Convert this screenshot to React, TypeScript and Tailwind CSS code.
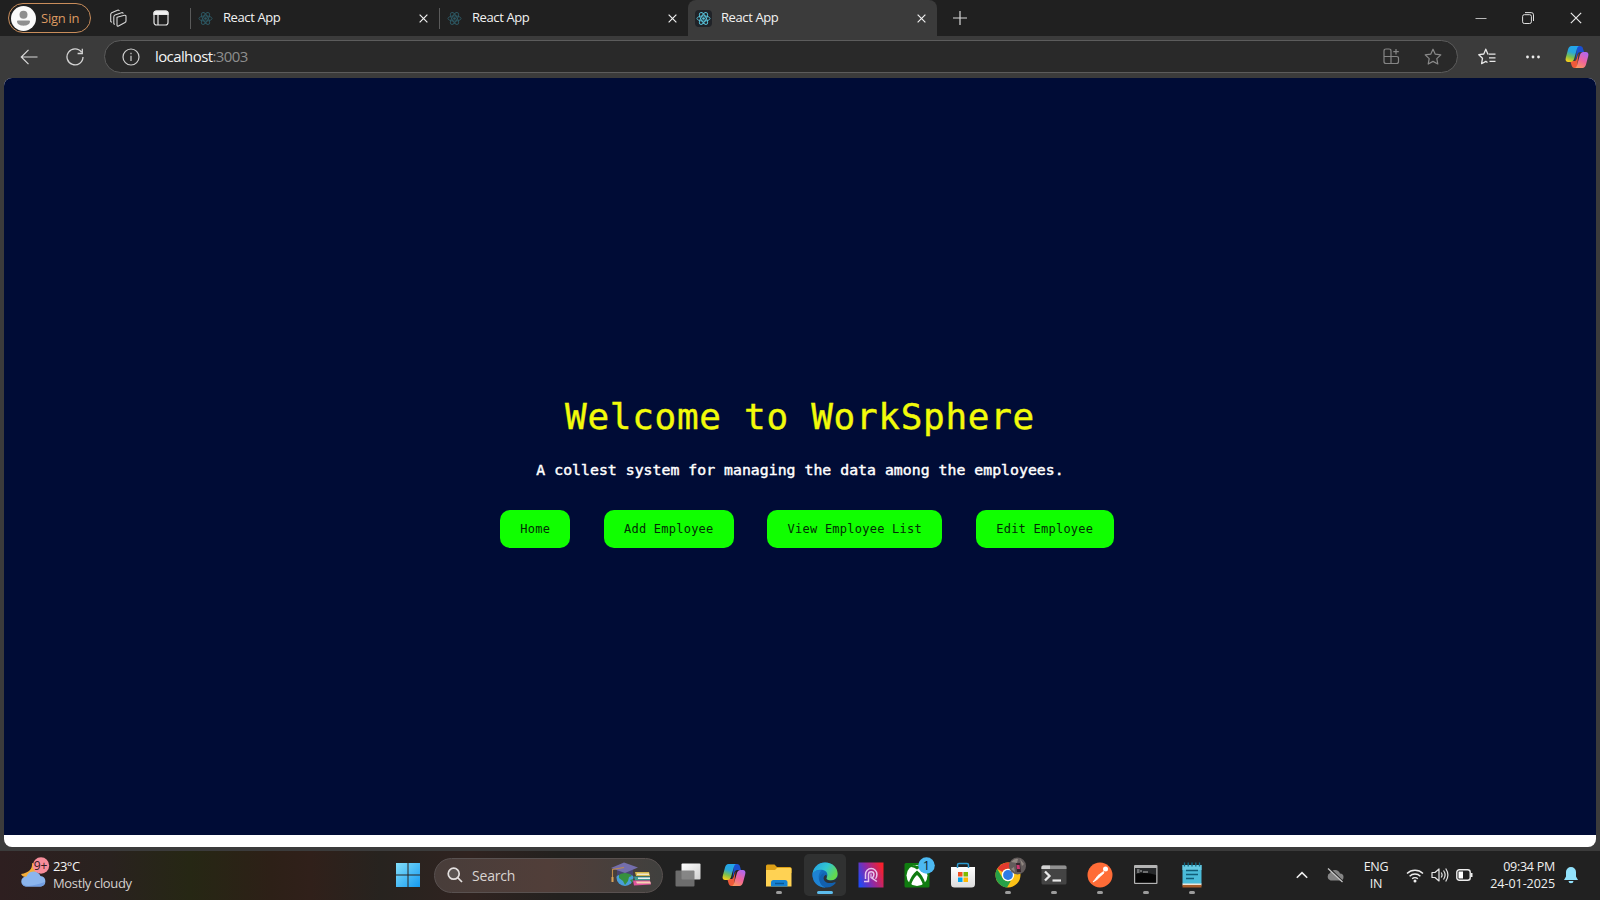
import React from "react";

type IconProps = { className?: string };

const ReactLogo = ({ className }: IconProps) => (
  <svg viewBox="0 0 16 16" className={className} fill="none" stroke="currentColor" strokeWidth="1">
    <ellipse cx="8" cy="8" rx="7" ry="2.8" />
    <ellipse cx="8" cy="8" rx="7" ry="2.8" transform="rotate(60 8 8)" />
    <ellipse cx="8" cy="8" rx="7" ry="2.8" transform="rotate(120 8 8)" />
    <circle cx="8" cy="8" r="1.4" fill="currentColor" stroke="none" />
  </svg>
);

const Cross = ({ className }: IconProps) => (
  <svg viewBox="0 0 10 10" className={className} fill="none" stroke="currentColor">
    <path d="M0.7 0.7 9.3 9.3M9.3 0.7 0.7 9.3" />
  </svg>
);

const Copilot = ({ className, id }: IconProps & { id: string }) => (
  <svg viewBox="0 0 24 24" className={className}>
    <defs>
      <linearGradient id={id + "a"} x1="0.6" y1="0" x2="0.3" y2="1">
        <stop offset="0" stopColor="#22a5ee" />
        <stop offset="0.4" stopColor="#2aa7d8" />
        <stop offset="0.7" stopColor="#7dc04c" />
        <stop offset="1" stopColor="#f5cf1c" />
      </linearGradient>
      <linearGradient id={id + "b"} x1="0.7" y1="0" x2="0.2" y2="1">
        <stop offset="0" stopColor="#b267ee" />
        <stop offset="0.5" stopColor="#f0639c" />
        <stop offset="1" stopColor="#fb9a5b" />
      </linearGradient>
    </defs>
    <path d="M12 1h3.200c1.500 0 2.300 1 2.700 2.200L19 7h-3.500c-1.800 0-2.600 1-3.100 2.600L10.500 16z" fill="#1b4fd0" />
    <path d="M12 23H9.400c-1.500 0-2.300-1-2.700-2.200L5.300 16h3.500c1.800 0 2.500-1 3-2.600L13.500 8z" fill="#ee5a3a" />
    <path d="M6.500 1h8c-1.500.2-2.100 1.300-2.600 3L9.200 13.500C8.600 15.600 7.500 17 5.500 17H3.300C.9 17 .1 15.200.8 12.800L3 4.500C3.700 2.200 4.700 1 6.500 1z" fill={"url(#" + id + "a)"} />
    <path d="M17.500 23h-8c1.500-.2 2.100-1.300 2.600-3l2.700-9.500c.6-2.100 1.700-3.500 3.700-3.500h2.200c2.400 0 3.200 1.800 2.500 4.200L21 19.500c-.7 2.300-1.700 3.500-3.500 3.500z" fill={"url(#" + id + "b)"} />
  </svg>
);

function Tab({ active }: { active?: boolean }) {
  return (
    <div className={"flex h-9 w-[249px] shrink-0 items-center " + (active ? "rounded-t-lg bg-[#3b3b3b]" : "")}>
      <div className={"h-[21px] w-px " + (active ? "" : "bg-[#5a5a5a]")} />
      <div className={"ml-[6px] flex h-[17px] w-[17px] items-center justify-center rounded-sm " + (active ? "bg-[#202328]" : "")}>
        <ReactLogo className={active ? "h-[15px] w-[15px] text-[#58c4dc]" : "h-[15px] w-[15px] text-[#2d5964]"} />
      </div>
      <span className="mb-[2px] ml-[9px] w-[196px] text-[13px] leading-none tracking-[-0.400px] text-[#f2f2f2]">React App</span>
      <Cross className="h-[9px] w-[9px] stroke-[1.300] text-[#f0f0f0]" />
    </div>
  );
}

function TabStrip() {
  return (
    <header className="flex h-9 shrink-0 items-center bg-[#202020]">
      <div className="ml-2 flex h-[30px] w-[83px] shrink-0 items-center rounded-full border border-[#c98d5b] pl-[2px]">
        <svg viewBox="0 0 25 25" className="h-[25px] w-[25px] shrink-0">
          <circle cx="12.500" cy="12.500" r="12.500" fill="#fafafa" />
          <circle cx="12.500" cy="8.800" r="4" fill="#8f8f8f" />
          <path d="M6 15.300q0-.9 1-.9h11q1 0 1 .9c0 3-3 4.400-6.500 4.400S6 18.300 6 15.300z" fill="#8f8f8f" />
        </svg>
        <span className="ml-[5px] whitespace-nowrap text-[13px] leading-none tracking-[-0.250px] text-[#dc9a62]">Sign in</span>
      </div>
      <svg viewBox="0 0 18 18" className="ml-[18px] h-[18px] w-[18px]" fill="none" stroke="#d6d6d6" strokeWidth="1.100" strokeLinejoin="round">
        <path d="M8 8.200 15.500 6.300Q17 6 17 7.500V12q0 1-1 1.500L9.500 17Q8 17.600 8 16z" />
        <path d="M5.800 15.500 4.800 14.800V8q0-1.500 1.200-2L12.500 3.700q1.500-.4 1.700 1M3 13.400 1.700 12.500V5.500q0-1.200 1-1.700L8.500 1.200q1.500-.5 1.800.8" />
      </svg>
      <svg viewBox="0 0 16 16" className="ml-[26px] h-4 w-4" fill="none" stroke="#e6e6e6" strokeWidth="1.200">
        <rect x="1" y="1" width="14" height="14" rx="2.500" />
        <path d="M1 3.500V3a2 2 0 0 1 2-2h10a2 2 0 0 1 2 2v1.500H1z" fill="#f2f2f2" />
        <path d="M5 5v10" />
      </svg>
      <div className="ml-[21px] flex">
        <Tab />
        <Tab />
        <Tab active />
      </div>
      <svg viewBox="0 0 14 14" className="ml-[16px] h-[14px] w-[14px]" stroke="#d8d8d8" strokeWidth="1.200">
        <path d="M7 0v14M0 7h14" />
      </svg>
      <svg viewBox="0 0 12 12" className="ml-auto h-3 w-3" stroke="#b8b8b8"><path d="M0.500 6.500h11" /></svg>
      <svg viewBox="0 0 12 12" className="ml-[35px] h-3 w-3" fill="none" stroke="#e0e0e0">
        <rect x="0.600" y="2.700" width="8.800" height="8.800" rx="1.700" />
        <path d="M3 .6h6.300q2.200 0 2.200 2.200V9" />
      </svg>
      <Cross className="ml-[36px] mr-[18px] h-3 w-3 text-[#e8e8e8]" />
    </header>
  );
}

const starPath = "M9 1.200 11.300 6.200 16.800 6.900 12.800 10.600 13.800 16 9 13.400 4.200 16 5.200 10.600 1.200 6.900 6.700 6.200z";

function AddressBar() {
  return (
    <div className="flex h-[41.500px] shrink-0 items-start bg-[#3b3b3b] pt-1">
      <div className="flex h-[33px] w-full items-center">
        <svg viewBox="0 0 18 18" className="ml-5 h-[18px] w-[18px]" fill="none" stroke="#dadada" strokeWidth="1.200">
          <path d="M17.500 9H1.500M8.500 1.800 1.300 9l7.200 7.200" />
        </svg>
        <svg viewBox="0 0 18 18" className="ml-[28px] h-[18px] w-[18px]" fill="none" stroke="#d4d4d4" strokeWidth="1.300">
          <path d="M15.500 4.200A8 8 0 1 0 17 9M16.300.8v4.700h-4.700" />
        </svg>
        <div className="ml-[20px] flex h-[33px] w-[1354px] items-center rounded-full border border-[#5c5c5c] bg-[#292929]">
          <svg viewBox="0 0 18 18" className="ml-[17px] h-[18px] w-[18px]" fill="none" stroke="#d0d0d0" strokeWidth="1.200">
            <circle cx="9" cy="9" r="8" />
            <path d="M9 7.800v5.200M9 4.800v1.400" />
          </svg>
          <span className="ml-[15px] text-[15px] leading-none tracking-[-0.600px] text-[#f4f4f4]">
            localhost<span className="text-[#8e8e8e]">:3003</span>
          </span>
          <svg viewBox="0 0 17 17" className="ml-auto h-[17px] w-[17px]" fill="none" stroke="#858585" strokeWidth="1.200">
            <path d="M8 8.500V3q0-2-2-2H3Q1 1 1 3v10.500q0 2 2 2h10.500q2 0 2-2v-3q0-2-2-2H1M8 8.500v7M13 1v5.500M10.300 3.700h5.500" />
          </svg>
          <svg viewBox="0 0 18 18" className="ml-[24px] mr-[15px] h-[18px] w-[18px]" fill="none" stroke="#8a8a8a" strokeWidth="1.200" strokeLinejoin="round">
            <path d={starPath} />
          </svg>
        </div>
        <svg viewBox="0 0 18 18" className="ml-[20px] h-[18px] w-[18px]" fill="none" stroke="#e8e8e8" strokeWidth="1.300" strokeLinejoin="round">
          <path d="M10.500 6H9.800L7.800 1.200 5.800 6 .8 6.700l3.700 3.500L3.600 15.700 7.800 13.400 9.500 14.500" />
          <path d="M11 6.200h6.500M11 9.800h6.500M11.500 13.400h6" />
        </svg>
        <svg viewBox="0 0 16 4" className="ml-[29px] h-1 w-4" fill="#ececec">
          <circle cx="2.500" cy="2" r="1.400" /><circle cx="8" cy="2" r="1.400" /><circle cx="13.500" cy="2" r="1.400" />
        </svg>
        <Copilot id="bar" className="ml-[24px] h-6 w-6" />
      </div>
    </div>
  );
}

const links: [string, string][] = [
  ["Home", "w-[70px]"],
  ["Add Employee", "w-[130px]"],
  ["View Employee List", "w-[175px]"],
  ["Edit Employee", "w-[138px]"],
];

function WelcomePage() {
  return (
    <main className="mx-1 flex h-[769px] shrink-0 flex-col overflow-hidden rounded-lg bg-white font-['DejaVu_Sans_Mono','Liberation_Mono',monospace]">
      <div className="flex h-[757.500px] flex-col items-center bg-[#000c36] pt-[315px]">
        <h1 className="whitespace-nowrap text-[36px] leading-[48px] tracking-[0.700px] text-[#f2fb0a] [-webkit-text-stroke:0.400px_#f2fb0a]">Welcome to WorkSphere</h1>
        <p className="mt-[17px] whitespace-nowrap text-[14.800px] leading-[24px] tracking-[0.030px] text-white [-webkit-text-stroke:0.450px_#ffffff]">
          A collest system for managing the data among the employees.
        </p>
        <nav className="ml-[14px] mt-[28px] flex gap-[33.500px]">
          {links.map(([label, width]) => (
            <button key={label} className={"h-[38px] whitespace-nowrap rounded-[10px] bg-[#10ff00] text-[12px] tracking-[0.240px] text-[#032b06] " + width}>
              {label}
            </button>
          ))}
        </nav>
      </div>
    </main>
  );
}

function Cell({ children, dot, active }: { children: React.ReactNode; dot?: boolean; active?: boolean }) {
  return (
    <div className="flex h-[49px] w-[45.800px] shrink-0 items-center justify-center">
      <div className={"flex h-[42px] w-[42px] flex-col items-center rounded-[5px] " + (active ? "bg-[#303131]" : "")}>
        <div className="mt-[7px] h-[28px] w-[28px]">{children}</div>
        <div className={"mt-[2px] h-[3px] rounded-full " + (active ? "w-4 bg-[#5dbcec]" : dot ? "w-[6px] bg-[#9c9c9c]" : "w-0")} />
      </div>
    </div>
  );
}

const S = ({ children }: { children: React.ReactNode }) => (
  <svg viewBox="0 0 28 28" className="h-7 w-7 overflow-visible">{children}</svg>
);

function SearchBox() {
  return (
    <div className="flex h-[35px] w-[229px] shrink-0 items-center rounded-full border border-[#595150] bg-linear-to-r from-[#483d3a] via-[#513e39] to-[#40403e]">
      <svg viewBox="0 0 16 16" className="ml-[12px] h-4 w-4" fill="#5b5452" stroke="#e4e0df" strokeWidth="1.700">
        <circle cx="6.700" cy="6.700" r="5.500" /><path d="M10.700 10.700 15 15" />
      </svg>
      <span className="ml-[9px] text-[14px] tracking-[-0.200px] text-[#d9d4d2]">Search</span>
      <svg viewBox="0 0 42 25" className="mb-[2px] ml-auto mr-[10px] h-[25px] w-[42px]">
        <circle cx="15" cy="15.500" r="8.500" fill="#489ed9" />
        <path d="M9 12l4-2 6 1 3 3-3 1-1 4-3 4-2-4-4-3zM20 18l3-1-1 4z" fill="#36903e" />
        <path d="M7 7v7q8-6 16 0V7z" fill="#47446f" />
        <path d="M1 6 14 .5 28 5.500 15 11z" fill="#746eac" />
        <path d="M14 5.500 2.500 7.500V19" fill="none" stroke="#c08c4a" strokeWidth="1.100" />
        <path d="M1.500 15h2v5h-2z" fill="#d6a35a" />
        <path d="M25 10h14l1 4H26z" fill="#d7b84d" /><path d="M27 11.500h12v1.500H27z" fill="#f0e9cd" />
        <path d="M24 14.500h16v4H25z" fill="#3f9b90" /><path d="M28 15.500h12V17H28z" fill="#eee" />
        <path d="M23 18.500h17l1 4-17 1z" fill="#e0559d" /><path d="M26 19.500h14l1 2H27z" fill="#f3d3b2" />
      </svg>
    </div>
  );
}

function TaskIcons() {
  return (
    <div className="ml-[2px] flex">
      <Cell><S>
        <defs><linearGradient id="tv" x1="0" y1="0" x2="1" y2="1"><stop stopColor="#fff" /><stop offset="1" stopColor="#d0d0d0" /></linearGradient></defs>
        <rect x="7.500" y="2.500" width="19" height="16" rx="1" fill="url(#tv)" />
        <rect x="1.500" y="9.500" width="19" height="16" rx="1" fill="#777" opacity=".88" />
      </S></Cell>
      <Cell><div className="flex h-7 w-7 items-center justify-center"><Copilot id="task" className="h-6 w-6" /></div></Cell>
      <Cell dot><S>
        <path d="M1 5q0-1.500 1.500-1.500h7L12 6h13q1.500 0 1.500 1.500V12H1z" fill="#dda016" />
        <path d="M1 9h9l2-2h13.500q1 0 1 1v17.500H1z" fill="#ffd253" />
        <path d="M6 25.500v-4Q6 19 8.500 19h11.500q2.500 0 2.500 2.500v4z" fill="#1683d3" /><path d="M10 22.500h9" stroke="#0a5794" strokeWidth="1.500" />
      </S></Cell>
      <Cell active><S>
        <defs>
          <linearGradient id="eg" x1="0" y1="0" x2="1" y2=".5"><stop stopColor="#249de5" /><stop offset=".55" stopColor="#31c6d2" /><stop offset="1" stopColor="#64d94c" /></linearGradient>
          <linearGradient id="eb" x1="0" y1="0" x2="1" y2="1"><stop stopColor="#1684d8" /><stop offset="1" stopColor="#0e4b94" /></linearGradient>
        </defs>
        <circle cx="14" cy="14" r="12.500" fill="url(#eb)" />
        <path d="M1.500 13C2.500 6 7.500 1.500 14 1.500c8 0 12.600 5.500 12.600 11.300 0 4.500-3.300 6.700-6.600 6.700-3.500 0-5.200-1.500-4.500-2.700 2-2.800.8-7.300-4.500-8-4.500-.5-8 1.500-9.500 4.200z" fill="url(#eg)" />
        <path d="M10.500 9.500C6 13 6.500 22 14.500 26.500 5.500 26.500 1.200 19.500 1.500 13c2-3.500 5.500-5 9-3.500z" fill="#1e83d4" />
        <path d="M15.500 16.800c-.7 1.200 1 2.700 4.500 2.700 2.500 0 4.800-1 6-3.200L27.500 20 25 22.500c-1 .8-6 1-9 .2-3.500-1-5-4-3.500-6.500q.8-1.600 2.500-2.500c1 1 1 2.300.5 3.100z" fill="#2b3237" />
        <path d="M12.500 16.500c0 4.500 4.500 7 11 4.700.8-.3 1.500.4 1 1-4.500 5.800-13.500 5.600-15.500-1-1.600-4.500 1-8.500 4-9-.8 1-.5 3-.5 4.300z" fill="#1260ae" />
      </S></Cell>
      <Cell><S>
        <defs><linearGradient id="pg" x1="0" y1=".7" x2="1" y2=".3"><stop stopColor="#2448f2" /><stop offset=".45" stopColor="#8f2aa5" /><stop offset="1" stopColor="#f8202c" /></linearGradient></defs>
        <rect x="1.500" y="1.500" width="25" height="25" fill="url(#pg)" />
        <path d="M7 20.500h4.500V13.500a2.700 2.700 0 0 1 5.400 0q0 2.500-2 3.500l5 3.500M8.500 18V13.200a5.700 5.700 0 0 1 11.400 0q0 3-1.400 4.500" fill="none" stroke="#e8c5ee" strokeWidth="1.500" />
        <path d="M14 12.500v4.500" fill="none" stroke="#e8c5ee" strokeWidth="1.200" />
      </S></Cell>
      <Cell><S>
        <rect x="1.500" y="2" width="25" height="24.500" rx="1.500" fill="#107c10" />
        <circle cx="14" cy="14.500" r="10.500" fill="#fff" />
        <path d="M7 6q4-.5 7 2.500 3-3 7-2.500-4-3-7-1-3-2-7 1zM5.500 23Q8 14 14 9.500 20 14 22.500 23L20 24Q18 17.500 14 14 10 17.500 8 24z" fill="#107c10" />
        <circle cx="23.500" cy="4.500" r="8.300" fill="#4cb9f2" />
        <text x="23.500" y="9" textAnchor="middle" fontSize="13" fill="#12222c" className="font-['Open_Sans']">1</text>
      </S></Cell>
      <Cell><S>
        <defs><linearGradient id="sg" x1="0" y1="0" x2="0" y2="1"><stop stopColor="#fff" /><stop offset="1" stopColor="#dcdcdc" /></linearGradient></defs>
        <path d="M2 6h24v17q0 3.500-3.500 3.500h-17Q2 26.500 2 23z" fill="url(#sg)" />
        <path d="M8.500 7V4q0-1.500 1.500-1.500h8q1.500 0 1.500 1.500v3" fill="none" stroke="#2c9ad0" strokeWidth="1.500" />
        <path d="M9 11h4.500v4.500H9z" fill="#f25022" /><path d="M14.500 11H19v4.500h-4.500z" fill="#7fba00" /><path d="M9 16.500h4.500V21H9z" fill="#00a4ef" /><path d="M14.500 16.500H19V21h-4.500z" fill="#ffb900" />
      </S></Cell>
      <Cell dot><S>
        <circle cx="14" cy="14" r="12.500" fill="#fbc116" />
        <path d="M3.200 7.700A12.500 12.500 0 0 1 24.800 7.700H14a6.300 6.300 0 0 0-5.500 3.200z" fill="#e33b2e" />
        <path d="M3.200 7.700 8.500 17a6.300 6.300 0 0 0 8.500 2.400L13 26.500A12.500 12.500 0 0 1 3.200 7.700z" fill="#26a148" />
        <circle cx="14" cy="14" r="6.200" fill="#fff" /><circle cx="14" cy="14" r="4.900" fill="#2c7be5" />
        <circle cx="23.500" cy="5" r="8.500" fill="#625b5b" />
        <path d="M17 1q4-4 7-3l-1 4zM26-2l4 5-2 2zM17 8l3-2 1 5z" fill="#918882" /><path d="M22 2h4l1 9h-4z" fill="#36262e" /><path d="M22.500 4h3l.5 4h-3z" fill="#c9376e" />
      </S></Cell>
      <Cell dot><S>
        <rect x="1.500" y="4.500" width="25" height="19" rx="1.500" fill="#444" />
        <path d="M1.500 8V6Q1.500 4.500 3 4.500h22q1.500 0 1.500 1.500v2z" fill="#909090" /><path d="M1.500 8V6Q1.500 4.500 3 4.500h7V8z" fill="#d2d2d2" />
        <path d="M5 10.500 9.500 15 5 19.500" fill="none" stroke="#e8e8e8" strokeWidth="2.300" /><path d="M12.500 19.500h8.500" stroke="#e8e8e8" strokeWidth="2.200" />
      </S></Cell>
      <Cell dot><S>
        <circle cx="14" cy="14" r="12.500" fill="#ff6c37" />
        <circle cx="19.500" cy="8" r="2.500" fill="#fff" />
        <path d="M17.500 10.500 12 14.500 9 18.500l-2 2.500 3.500-2 3-3 4.500-4z" fill="#fff" stroke="#fff" strokeWidth=".8" strokeLinejoin="round" />
      </S></Cell>
      <Cell dot><S>
        <rect x="2" y="4" width="23.500" height="19" rx="1" fill="#b4b4b4" /><path d="M3.200 7h21v14.800h-21z" fill="#070707" />
        <path d="M4 13Q14 10.500 24 14V7H4z" fill="#26282a" /><path d="M5 9h2.500M5 11h2.500M9 9v2M11 11h5" stroke="#b7b7b7" strokeWidth="1" />
      </S></Cell>
      <Cell dot><S>
        <path d="M4.500 4h19v19h-19z" fill="#4abbd9" /><path d="M4.500 4h19v5h-19z" fill="#66cae2" />
        <path d="M4.500 22.500h19v2h-19z" fill="#eee5d8" /><path d="M4.500 24h19v2.500h-19z" fill="#a75d2b" />
        <path d="M6.500 1.500v4M10.200 1.500v4M14 1.500v4M17.800 1.500v4M21.500 1.500v4" stroke="#126a85" strokeWidth="1.300" />
        <path d="M8 9.500h12M8 13.500h12M8 17.500h8" stroke="#115d78" strokeWidth="1.500" />
      </S></Cell>
    </div>
  );
}

function Tray() {
  return (
    <div className="ml-auto flex items-center text-[12.500px] text-[#f0f0f0]">
      <svg viewBox="0 0 12 8" className="h-2 w-3" fill="none" stroke="#eee" strokeWidth="1.600"><path d="M.8 6.800 6 1.600l5.200 5.200" /></svg>
      <svg viewBox="0 0 18 16" className="ml-[18px] h-4 w-[18px]">
        <path d="M4.500 13.500a4 4 0 0 1-.5-7.500A5.500 5.500 0 0 1 14 6.500a3.500 3.500 0 0 1 0 7z" fill="#858585" />
        <path d="M3.500 1.500 17 14.500" stroke="#222" strokeWidth="1.500" /><path d="M2 1.500 16.500 15" stroke="#c9c9c9" strokeWidth="1.200" />
      </svg>
      <div className="ml-[19px] w-[26px] text-center leading-[17px] tracking-[-0.250px]">ENG<br />IN</div>
      <svg viewBox="0 0 18 15" className="ml-[17px] h-[15px] w-[18px]" fill="none" stroke="#ededed" strokeWidth="1.400">
        <path d="M1 5.500a11.500 11.500 0 0 1 16 0M3.600 8.200a7.700 7.700 0 0 1 10.800 0M6.200 10.800a4 4 0 0 1 5.600 0" /><circle cx="9" cy="13" r="1.500" fill="#eee" stroke="none" />
      </svg>
      <svg viewBox="0 0 18 16" className="ml-[7px] h-4 w-[18px]" fill="none" stroke="#e6e6e6" strokeWidth="1.200" strokeLinejoin="round">
        <path d="M1 5.500h3L8 2v12l-4-3.500H1zM10.200 5.500q1.800 2.500 0 5M12.500 3.500q3.200 4.500 0 9M14.700 1.500q4.400 6.500 0 13" />
      </svg>
      <svg viewBox="0 0 17 12" className="ml-[7px] h-3 w-[17px]" fill="none" stroke="#ededed" strokeWidth="1.400">
        <rect x=".8" y=".8" width="13.400" height="10.400" rx="2.500" /><path d="M2.500 2.500H7v7H2.500z" fill="#fff" stroke="none" /><path d="M15.500 4v4" strokeWidth="2" />
      </svg>
      <div className="ml-[15px] w-[67px] whitespace-nowrap text-right leading-[17px]">
        <span className="tracking-[-0.260px]">09:34 PM</span><br /><span className="tracking-[-0.050px]">24-01-2025</span>
      </div>
      <svg viewBox="0 0 16 18" className="ml-[8px] mr-[21px] h-[18px] w-4" fill="#92e2fc">
        <path d="M8 1a5 5 0 0 0-5 5v4.500L1 14h14l-2-3.500V6a5 5 0 0 0-5-5zM5.500 15h5a2.500 2.200 0 0 1-5 0z" />
      </svg>
    </div>
  );
}

function Taskbar() {
  return (
    <footer className="flex h-[49px] shrink-0 items-center bg-linear-[90deg,#2e1f20_0px,#29221f_110px,#262714_190px,#2d2017_270px,#30201a_310px,#27231f_380px,#302320_470px,#23211f_560px,#212121_670px] pb-px">
      <svg viewBox="0 0 28 30" className="mb-[6px] ml-[20px] h-[30px] w-[28px] shrink-0 overflow-visible">
        <path d="M12 6q1 9-11 11 2 4 9 3l9-6q-1-7-7-8z" fill="#f4ad38" />
        <path d="M6 29.500a5 5 0 0 1 .5-10 7.500 7.500 0 0 1 14-.5 5.300 5.300 0 0 1 .5 10.500z" fill="#8bb5ed" />
        <path d="M2 26q3 4 10 2.500T25 25q-1 4.500-5 4.500H6Q3 29.500 2 26z" fill="#729ee2" />
        <circle cx="21" cy="8.500" r="8.200" fill="#f78d9b" />
        <text x="20.500" y="13" textAnchor="middle" fontSize="12" fill="#301a20" className="font-['Open_Sans']">9+</text>
      </svg>
      <div className="ml-[5px] w-[343px] shrink-0 text-[13px] leading-[17px] text-[#d5d1cf]">
        <div className="tracking-[-0.500px] text-[#f4f4f4]">23°C</div>
        <div className="tracking-[-0.350px]">Mostly cloudy</div>
      </div>
      <svg viewBox="0 0 24 24" className="mr-[14px] h-6 w-6 shrink-0">
        <defs><linearGradient id="win" gradientUnits="userSpaceOnUse" x1="0" y1="0" x2="24" y2="24"><stop stopColor="#83dffb" /><stop offset="1" stopColor="#159af0" /></linearGradient></defs>
        <path d="M0 0h11.500v11.500H0zM12.500 0H24v11.500H12.500zM0 12.500h11.500V24H0zM12.500 12.500H24V24H12.500z" fill="url(#win)" />
      </svg>
      <SearchBox />
      <TaskIcons />
      <Tray />
    </footer>
  );
}

export default function App() {
  return (
    <div className="flex h-[900px] w-[1600px] flex-col overflow-hidden bg-[#3b3b3b] font-['Open_Sans','Noto_Sans',sans-serif]">
      <TabStrip />
      <AddressBar />
      <WelcomePage />
      <div className="h-[4.500px] shrink-0" />
      <Taskbar />
    </div>
  );
}
